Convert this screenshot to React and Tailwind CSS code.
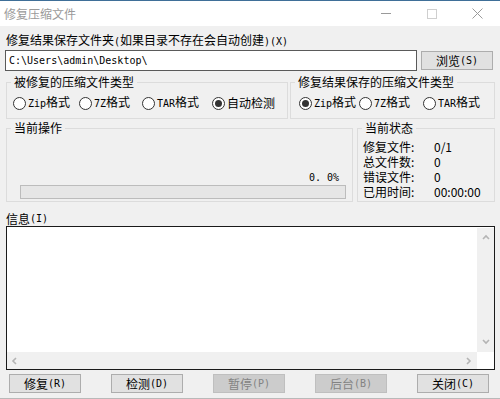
import React from "react";

const L = ({ children }) => (
  <span className="font-['DejaVu_Sans_Mono',monospace] text-[10px]">{children}</span>
);

const Radio = ({ checked, children, w }) => (
  <div className={`flex items-center h-[14px] ${w}`}>
    <span className="w-[13px] h-[13px] rounded-full border border-[#333333] bg-white flex items-center justify-center shrink-0">
      {checked && <span className="w-[7px] h-[7px] rounded-full bg-[#333333]" />}
    </span>
    <span className="ml-[2px] whitespace-nowrap">{children}</span>
  </div>
);

const Group = ({ title, className, children }) => (
  <fieldset className={`border border-[#dcdcdc] min-w-0 ${className}`}>
    <legend className="ml-[4px] px-[3px] h-[14px] leading-[14px] whitespace-nowrap">{title}</legend>
    {children}
  </fieldset>
);

const Btn = ({ children, disabled }) => (
  <div
    className={`w-[72px] h-[19px] border flex items-center justify-center leading-[14px] ${
      disabled
        ? "bg-[#cccccc] border-[#bfbfbf] text-[#838383]"
        : "bg-[#e1e1e1] border-[#adadad] text-black"
    }`}
  >
    {children}
  </div>
);

const Chevron = ({ dir }) => {
  const pts = {
    up: "1,5 4,2 7,5",
    down: "1,2 4,5 7,2",
    left: "5,1 2,4 5,7",
    right: "2,1 5,4 2,7",
  }[dir];
  return (
    <svg width="8" height="8" viewBox="0 0 8 8">
      <polyline points={pts} fill="none" stroke="#b4b4b4" strokeWidth="1.6" />
    </svg>
  );
};

export default function App() {
  return (
    <div className="w-[500px] h-[399px] bg-[#f0f0f0] flex flex-col overflow-hidden text-[12px] leading-[14px] text-black font-['Noto_Sans_CJK_SC',sans-serif]">
      {/* top edge */}
      <div className="h-px bg-[#3f6f98] shrink-0" />
      {/* title bar */}
      <div className="h-[25px] bg-white flex items-center shrink-0">
        <span className="pl-[4px] text-[#9a9a9a]">修复压缩文件</span>
        <div className="ml-auto flex h-full">
          <div className="w-[46px] h-full flex items-center justify-center">
            <div className="w-[10px] h-px bg-[#9a9a9a]" />
          </div>
          <div className="w-[46px] h-full flex items-center justify-center">
            <div className="w-[10px] h-[10px] border border-[#cfcfcf]" />
          </div>
          <div className="w-[45px] h-full flex items-center justify-center">
            <svg width="11" height="11" viewBox="0 0 11 11">
              <path d="M0.5 0.5 L10.5 10.5 M10.5 0.5 L0.5 10.5" stroke="#9a9a9a" strokeWidth="1" />
            </svg>
          </div>
        </div>
      </div>

      {/* label */}
      <div className="mt-[7px] ml-[6px] h-[14px] whitespace-nowrap">
        修复结果保存文件夹<L>(</L>如果目录不存在会自动创建<L>)(X)</L>
      </div>

      {/* path row */}
      <div className="mt-[3px] ml-[5px] flex items-center h-[21px]">
        <div className="w-[412px] h-[21px] bg-white border border-[#5a5a5a] flex items-center pl-[3px]">
          <span className="font-['DejaVu_Sans_Mono',monospace] text-[10px]">C:\Users\admin\Desktop\</span>
        </div>
        <div className="ml-[4px] w-[72px] h-[19px] bg-[#e1e1e1] border border-[#adadad] flex items-center justify-center">
          浏览<L>(S)</L>
        </div>
      </div>

      {/* group row 1 */}
      <div className="mt-[4px] ml-[6px] flex">
        <Group title="被修复的压缩文件类型" className="w-[282px] h-[44px]">
          <div className="pt-[7px] pl-[6px] flex">
            <Radio w="w-[66px]"><L>Zip</L>格式</Radio>
            <Radio w="w-[63px]"><L>7Z</L>格式</Radio>
            <Radio w="w-[70px]"><L>TAR</L>格式</Radio>
            <Radio checked w="">自动检测</Radio>
          </div>
        </Group>
        <Group title="修复结果保存的压缩文件类型" className="ml-[2px] w-[205px] h-[44px]">
          <div className="pt-[7px] pl-[8px] flex">
            <Radio checked w="w-[60px]"><L>Zip</L>格式</Radio>
            <Radio w="w-[64px]"><L>7Z</L>格式</Radio>
            <Radio w=""><L>TAR</L>格式</Radio>
          </div>
        </Group>
      </div>

      {/* group row 2 */}
      <div className="mt-[2px] ml-[6px] flex">
        <Group title="当前操作" className="w-[347px] h-[81px]">
          <div className="h-[66px] flex flex-col justify-end pb-[2px] pl-[13px]">
            <div className="w-[326px] h-[14px] text-right pr-[7px] mb-[2px]">
              <L>0. 0%</L>
            </div>
            <div className="w-[326px] h-[14px] bg-[#e6e6e6] border border-[#bcbcbc]" />
          </div>
        </Group>
        <Group title="当前状态" className="ml-[4px] w-[138px] h-[81px]">
          <div className="pt-[4px] pl-[5px] flex flex-col">
            {[
              ["修复文件:", "0/1"],
              ["总文件数:", "0"],
              ["错误文件:", "0"],
              ["已用时间:", "00:00:00"],
            ].map(([k, v]) => (
              <div key={k} className="h-[15px] leading-[15px] flex items-center">
                <span className="w-[71px] whitespace-nowrap">{k}</span>
                <span className="whitespace-nowrap">{v}</span>
              </div>
            ))}
          </div>
        </Group>
      </div>

      {/* info label */}
      <div className="mt-[9px] ml-[6px] h-[15px] flex items-center">
        信息<L>(I)</L>
      </div>

      {/* memo */}
      <div className="ml-[6px] w-[489px] h-[144px] border border-[#1a1a1a] bg-white flex flex-col">
        <div className="flex flex-1">
          <div className="flex-1 bg-white" />
          <div className="w-[17px] mt-px bg-[#f0f0f0] flex flex-col items-center justify-between py-[6px]">
            <Chevron dir="up" />
            <Chevron dir="down" />
          </div>
        </div>
        <div className="flex h-[17px]">
          <div className="flex-1 bg-[#f0f0f0] flex items-center justify-between px-[4px]">
            <Chevron dir="left" />
            <Chevron dir="right" />
          </div>
          <div className="w-[17px] bg-white" />
        </div>
      </div>

      {/* buttons */}
      <div className="mt-[4px] ml-[9px] flex gap-[30px]">
        <Btn>修复<L>(R)</L></Btn>
        <Btn>检测<L>(D)</L></Btn>
        <Btn disabled>暂停<L>(P)</L></Btn>
        <Btn disabled>后台<L>(B)</L></Btn>
        <Btn>关闭<L>(C)</L></Btn>
      </div>

      <div className="flex-1" />
      <div className="h-px bg-[#b9b9b9] shrink-0" />
    </div>
  );
}
